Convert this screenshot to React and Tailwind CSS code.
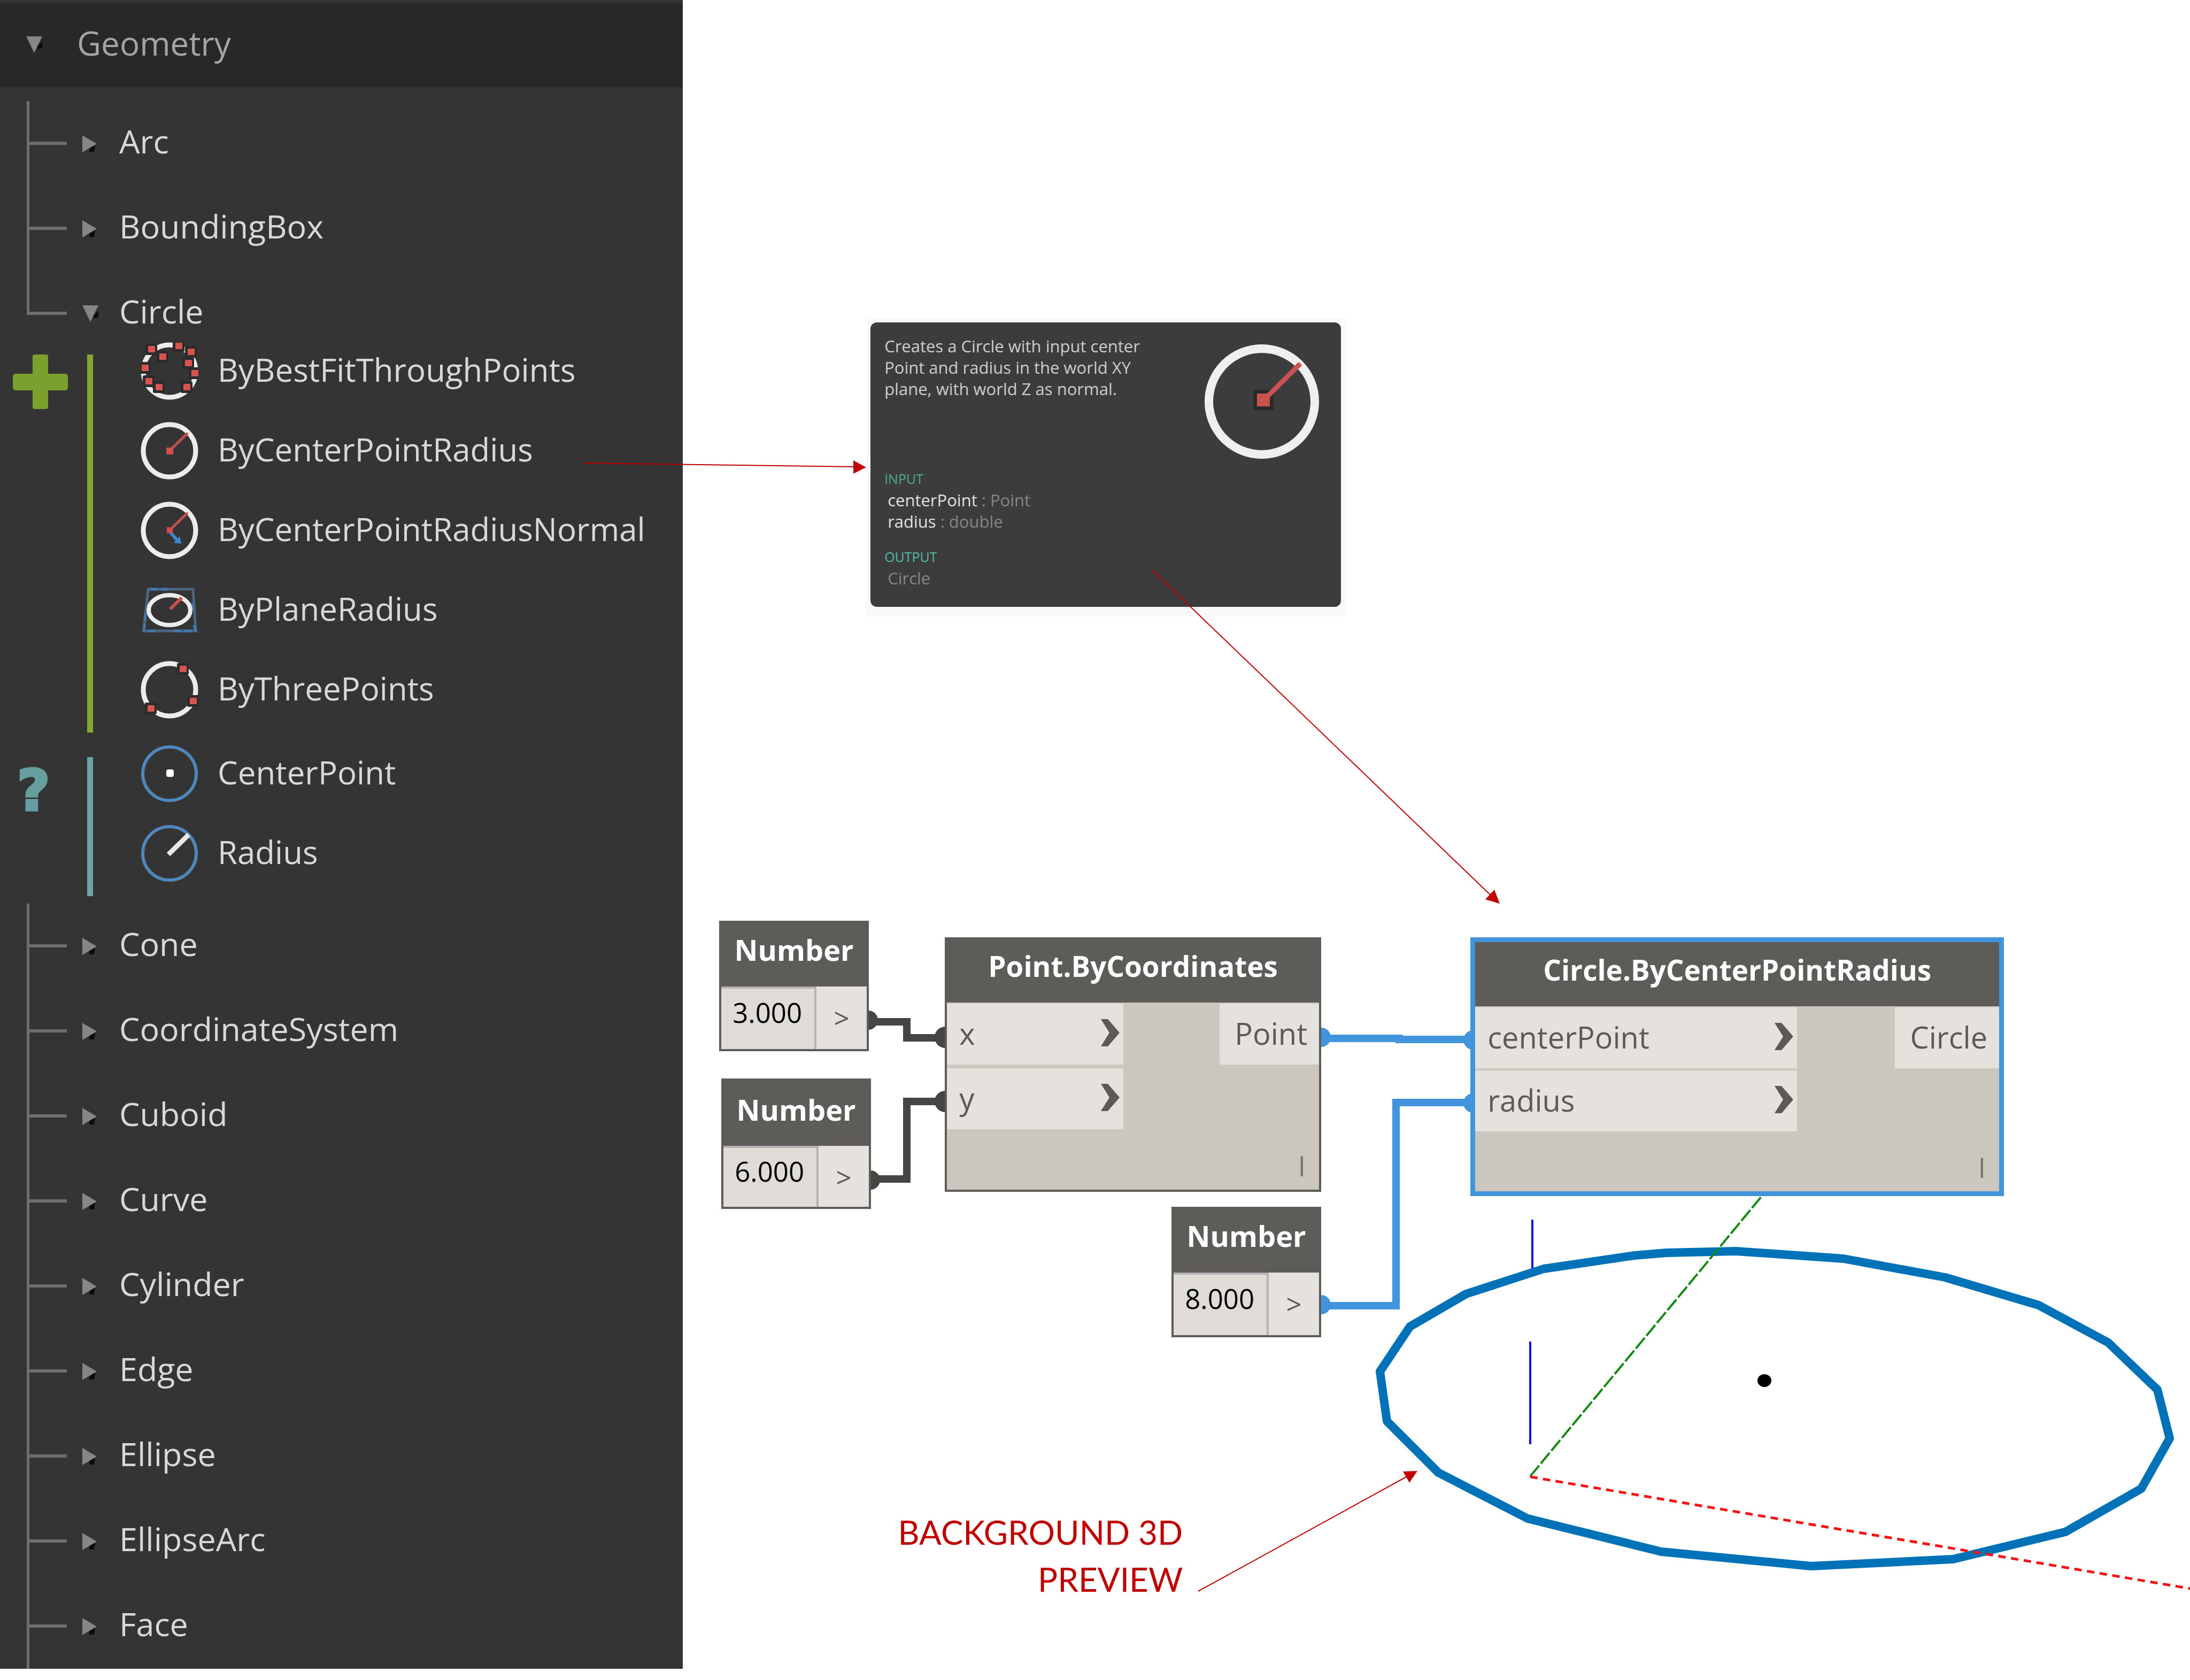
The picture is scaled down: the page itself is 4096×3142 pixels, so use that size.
import React from "react";

/* ---------- Library tree ---------- */

function Caret({ open }) {
  return open ? (
    <svg className="h-[32px] w-[30px] shrink-0" viewBox="0 0 30 32" aria-hidden="true">
      <polygon points="20,20 30,10 30,22 22,24" fill="#0c0c0c" />
      <polygon points="0,0 30,0 15,31" fill="#868686" />
    </svg>
  ) : (
    <svg className="h-[32px] w-[30px] shrink-0" viewBox="0 0 30 32" aria-hidden="true">
      <polygon points="13,24 24,18 22,31 13,31" fill="#0c0c0c" />
      <polygon points="0,0 27,16 0,32" fill="#868686" />
    </svg>
  );
}

function TreeRow({ label, open, last }) {
  return (
    <button
      type="button"
      aria-expanded={!!open}
      className="flex h-[159px] w-full items-center pl-[50px] text-left text-[61px] leading-[84px] text-[#d8d8d8]"
    >
      <span className="flex h-full w-[75px] shrink-0 flex-col">
        <span className="h-[82px] border-b-[6px] border-l-[5px] border-[#6e6e6e]" />
        <span className={last ? "flex-1" : "flex-1 border-l-[5px] border-[#6e6e6e]"} />
      </span>
      <span className="flex w-[98px] shrink-0 justify-start pl-[29px]">
        <Caret open={open} />
      </span>
      <span className="pb-[10px]">{label}</span>
    </button>
  );
}

function Pin({ x, y }) {
  return (
    <g>
      <rect x={x - 11} y={y - 11} width="22" height="22" rx="3" fill="#2a2b2b" />
      <rect x={x - 6} y={y - 6} width="13" height="12" rx="1" fill="#d9534f" />
    </g>
  );
}

const bestFitPins = [
  [71, 7], [94, 18], [20, 13], [41, 27], [89, 39], [101, 58], [8, 48], [15, 73], [34, 84], [86, 84],
];
const threePins = [[79, 15], [98, 75], [19, 89]];

const icons = {
  bestFit: (
    <>
      <circle cx="54" cy="54" r="49" fill="none" stroke="#ececec" strokeWidth="9" />
      {bestFitPins.map(([x, y]) => <Pin key={x} x={x} y={y} />)}
    </>
  ),
  radius: (
    <>
      <circle cx="54" cy="54" r="49" fill="none" stroke="#ececec" strokeWidth="9" />
      <path d="M54 54 88 21" stroke="#c0504d" strokeWidth="5" />
      <rect x="48" y="48" width="13" height="13" fill="#d04f4c" />
    </>
  ),
  normal: (
    <>
      <circle cx="54" cy="54" r="49" fill="none" stroke="#ececec" strokeWidth="9" />
      <path d="M54 54 88 21" stroke="#c0504d" strokeWidth="5" />
      <path d="M54 56 70 74" stroke="#3f87cc" strokeWidth="6" />
      <polygon points="76,79 62,77 73,65" fill="#3f87cc" />
      <rect x="49" y="48" width="11" height="11" fill="#d04f4c" />
    </>
  ),
  plane: (
    <>
      <polygon points="14,15 98,15 103,93 6,93" fill="none" stroke="#4b6680" strokeWidth="5" />
      <path d="M18 15H55M9 60 6 93M14 93H34M62 93H103L100 82M14 60V40M97 40V60" fill="none" stroke="#4079b0" strokeWidth="5" strokeDasharray="14 6" />
      <ellipse cx="54" cy="54" rx="39" ry="28" fill="none" stroke="#ececec" strokeWidth="8" />
      <path d="M55 52 77 31" stroke="#c4524e" strokeWidth="6" />
    </>
  ),
  three: (
    <>
      <circle cx="54" cy="54" r="49" fill="none" stroke="#ececec" strokeWidth="9" />
      {threePins.map(([x, y]) => <Pin key={x} x={x} y={y} />)}
    </>
  ),
  center: (
    <>
      <circle cx="54" cy="54" r="50" fill="none" stroke="#4f86bb" strokeWidth="6" />
      <rect x="48" y="46" width="14" height="14" rx="4" fill="#ffffff" />
    </>
  ),
  length: (
    <>
      <circle cx="54" cy="54" r="50" fill="none" stroke="#4f86bb" strokeWidth="6" />
      <path d="M52 56 90 19" stroke="#e8e8e8" strokeWidth="9" />
    </>
  ),
};

function MethodRow({ label, icon }) {
  return (
    <button
      type="button"
      className="flex h-[149px] w-full items-center gap-[36px] text-left text-[60px] leading-[84px] text-[#d8d8d8]"
    >
      <svg className="h-[108px] w-[108px] shrink-0" viewBox="0 0 108 108" aria-hidden="true">
        {icons[icon]}
      </svg>
      <span className="pb-[6px]">{label}</span>
    </button>
  );
}

function MethodGroup({ marker, bar, items }) {
  return (
    <div className="flex pb-[6px]">
      <div className="flex w-[163px] shrink-0 items-start pl-[24px] pt-[44px]">{marker}</div>
      <div className="flex pt-[44px]">
        <div className={`-mb-[6px] w-[11px] ${bar}`} />
      </div>
      <ul className="flex-1 pl-[89px]">
        {items.map((it) => (
          <li key={it.label}>
            <MethodRow {...it} />
          </li>
        ))}
      </ul>
    </div>
  );
}

const createMethods = [
  { label: "ByBestFitThroughPoints", icon: "bestFit" },
  { label: "ByCenterPointRadius", icon: "radius" },
  { label: "ByCenterPointRadiusNormal", icon: "normal" },
  { label: "ByPlaneRadius", icon: "plane" },
  { label: "ByThreePoints", icon: "three" },
];
const queryMethods = [
  { label: "CenterPoint", icon: "center" },
  { label: "Radius", icon: "length" },
];
const moreClasses = [
  "Cone", "CoordinateSystem", "Cuboid", "Curve", "Cylinder", "Edge", "Ellipse", "EllipseArc", "Face",
];

function Library() {
  return (
    <aside className="w-[31.18%] shrink-0 self-start bg-[#343434] pt-[5px]">
      <button
        type="button"
        aria-expanded="true"
        className="flex h-[158px] w-full items-center bg-[#282828] pl-[49px] text-left text-[62px] leading-[84px] font-medium text-[#a4a4a4]"
      >
        <span className="flex w-[95px] shrink-0">
          <Caret open />
        </span>
        <span className="pb-[8px]">Geometry</span>
      </button>
      <div className="pt-[26px]">
        <TreeRow label="Arc" />
        <TreeRow label="BoundingBox" />
        <TreeRow label="Circle" open last />
      </div>
      <div className="-mt-[47px]">
        <MethodGroup
          bar="bg-[#84a930]"
          items={createMethods}
          marker={
            <svg className="h-[102px] w-[103px]" viewBox="0 0 103 102" aria-label="Create">
              <rect x="37" y="0" width="29" height="102" rx="4" fill="#7ba02e" />
              <rect x="0" y="36" width="103" height="31" rx="5" fill="#7ba02e" />
            </svg>
          }
        />
      </div>
      <div className="mt-[2px]">
        <MethodGroup
          bar="bg-[#6ba5a6]"
          items={queryMethods}
          marker={
            <span className="pl-[8px] font-['DejaVu_Sans',sans-serif] text-[106px] leading-[126px] font-bold text-[#679fa0] [-webkit-text-stroke:5px_#679fa0]">
              ?
            </span>
          }
        />
      </div>
      <div className="pt-[14px]">
        {moreClasses.map((label) => (
          <TreeRow key={label} label={label} />
        ))}
      </div>
    </aside>
  );
}

/* ---------- Tooltip ---------- */

function Tooltip() {
  return (
    <div className="absolute top-[596px] left-[344px] w-[896px] bg-[#f9f9f9] pt-[7px] pr-[9px] pb-[18px] pl-[7px]">
      <div className="flex h-[532px] justify-between rounded-[12px] bg-[#3c3c3c] pt-[24px] pr-[40px] pl-[26px] text-[31px] leading-[40px] text-[#cccccc]">
        <div className="flex flex-col">
          <p className="w-[520px]">
            Creates a Circle with input center
            <br />
            Point and radius in the world XY
            <br />
            plane, with world Z as normal.
          </p>
          <h3 className="mt-[128px] text-[25px] text-[#4aa893]">INPUT</h3>
          <p className="pl-[6px] text-[#858585]">
            <span className="text-[#e0e0e0]">centerPoint</span> : Point
          </p>
          <p className="pl-[6px] text-[#858585]">
            <span className="text-[#e0e0e0]">radius</span> : double
          </p>
          <h3 className="mt-[26px] text-[25px] text-[#4fbca4]">OUTPUT</h3>
          <p className="pl-[6px] text-[#858585]">Circle</p>
        </div>
        <svg className="mt-[16px] h-[216px] w-[216px] shrink-0" viewBox="0 0 216 216" aria-hidden="true">
          <circle cx="108" cy="108" r="99" fill="none" stroke="#efefef" strokeWidth="16" />
          <rect x="92" y="86" width="38" height="38" fill="#2a2a2a" />
          <path d="M111 106 180 37" stroke="#c9524e" strokeWidth="9" />
          <rect x="99" y="93" width="24" height="24" fill="#c9524e" />
        </svg>
      </div>
    </div>
  );
}

/* ---------- Graph nodes ---------- */

function NumberNode({ id, value, place, head }) {
  return (
    <section className={`absolute flex h-[244px] w-[280px] flex-col border-[4px] border-[#5e5c59] bg-[#e5e2dd] ${place}`}>
      <label
        htmlFor={id}
        className={`block bg-[#5e5c59] text-center text-[54px] leading-[76px] font-bold text-white ${head}`}
      >
        Number
      </label>
      <div className="flex flex-1">
        <input
          id={id}
          defaultValue={value}
          className="w-[178px] min-w-0 border-t-[4px] border-r-[4px] border-[#b3b2b6] bg-[#dfdcd7] pb-[24px] pl-[21px] text-[51px] text-black outline-none"
        />
        <span className="flex-1 pt-[24px] text-center text-[51px] leading-[68px] text-[#5a5a5a]">&gt;</span>
      </div>
    </section>
  );
}

function Port({ label }) {
  return (
    <button
      type="button"
      className="flex h-[114px] w-full items-center justify-between bg-[#e5e2dd] pr-[7px] pl-[23px] text-[56px] leading-[76px] text-[#5c5a58]"
    >
      <span className="pb-[4px]">{label}</span>
      <svg className="mb-[6px] h-[51px] w-[35px]" viewBox="0 0 35 51" aria-hidden="true">
        <path d="M0 0H13L35 25.500 13 51H0L16 25.500Z" fill="#5c5a58" />
      </svg>
    </button>
  );
}

function FunctionNode({ title, inputs, output, place, head, inputsWidth, gap }) {
  return (
    <section className={`absolute flex flex-col bg-[#cbc6be] ${place}`}>
      <h2 className={`bg-[#5e5c59] text-center text-[53px] leading-[76px] font-bold text-white ${head}`}>{title}</h2>
      <div className="flex items-start justify-between pt-[2px]">
        <div className={`flex flex-col ${inputsWidth} ${gap}`}>
          {inputs.map((name) => (
            <Port key={name} label={name} />
          ))}
        </div>
        <button
          type="button"
          className="h-[114px] bg-[#e5e2dd] pr-[22px] pb-[4px] pl-[28px] text-[56px] leading-[76px] text-[#5c5a58]"
        >
          {output}
        </button>
      </div>
      <span className="mt-auto mr-[26px] mb-[14px] self-end text-[50px] leading-[60px] text-[#76736f]">l</span>
    </section>
  );
}

/* ---------- 3D preview, wires and annotations ---------- */

const circlePoints =
  "3117,2343 3247,2340 3448,2354 3638,2389 3813,2441 3943,2511 4035,2599 4058,2690 4005,2784 3863,2865 3653,2916 3387,2929 3107,2902 2857,2840 2690,2754 2594,2658 2581,2565 2637,2481 2742,2420 2887,2373 3057,2348";

const layer = "pointer-events-none absolute top-0 left-0 h-[3142px] w-[2819px] overflow-visible";

function Preview() {
  return (
    <svg className={layer} viewBox="1277 0 2819 3142" aria-hidden="true">
      <path d="M2866 2281V2376M2862 2509V2701" stroke="#1010f0" strokeWidth="4" />
      <polygon points={circlePoints} fill="none" stroke="#0072b8" strokeWidth="16" strokeLinejoin="round" />
      <path d="M2862 2761 3296 2236" stroke="#128a12" strokeWidth="4" strokeDasharray="26 5" />
      <path d="M2862 2762 4096 2971" stroke="#f41414" strokeWidth="5" strokeDasharray="14 10" />
      <ellipse cx="3300" cy="2582" rx="13" ry="12" fill="#000000" />
    </svg>
  );
}

function Wires() {
  return (
    <svg className={layer} viewBox="1277 0 2819 3142" aria-hidden="true">
      <g fill="none" strokeWidth="14" stroke="#454545">
        <path d="M1624 1911H1696V1941H1768" />
        <path d="M1628 2205H1696V2060H1768" />
      </g>
      <g fill="#454545">
        <circle cx="1624" cy="1908" r="18" />
        <circle cx="1628" cy="2207" r="18" />
        <circle cx="1768" cy="1940" r="20" />
        <circle cx="1768" cy="2060" r="20" />
      </g>
      <g fill="none" strokeWidth="14" stroke="#4295dd">
        <path d="M2471 1942H2617V1944H2752" />
        <path d="M2471 2442H2611V2062H2752" />
      </g>
      <g fill="#4295dd">
        <circle cx="2471" cy="1940" r="18" />
        <circle cx="2471" cy="2440" r="18" />
        <circle cx="2755" cy="1945" r="18" />
        <circle cx="2755" cy="2063" r="18" />
      </g>
    </svg>
  );
}

function Arrows() {
  return (
    <svg className={layer} viewBox="1277 0 2819 3142" aria-hidden="true">
      <g stroke="#c00000" strokeWidth="2">
        <path d="M1092 866 1600 873" />
        <path d="M2156 1067 2792 1678" />
        <path d="M2241 2976 2634 2760" />
      </g>
      <g fill="#c00000">
        <polygon points="1620,874 1596,861 1596,886" />
        <polygon points="2805,1690 2778,1682 2795,1664" />
        <polygon points="2651,2751 2624,2752 2636,2773" />
      </g>
    </svg>
  );
}

export default function App() {
  return (
    <div className="flex min-h-screen items-stretch bg-white font-['Open_Sans','Noto_Sans',sans-serif]">
      <Library />
      <main className="relative flex-1">
        <Preview />
        <Tooltip />
        <Wires />
        <NumberNode id="num-x" value="3.000" place="left-[68px] top-[1722px]" head="h-[119px] pt-[12px]" />
        <NumberNode id="num-y" value="6.000" place="left-[72px] top-[2017px]" head="h-[122px] pt-[16px]" />
        <NumberNode id="num-r" value="8.000" place="left-[914px] top-[2257px]" head="h-[119px] pt-[12px]" />
        <FunctionNode
          title="Point.ByCoordinates"
          inputs={["x", "y"]}
          output="Point"
          place="left-[490px] top-[1753px] h-[476px] w-[704px] border-[4px] border-[#5e5c59]"
          head="h-[118px] pt-[12px]"
          inputsWidth="w-[330px]"
          gap="gap-[7px]"
        />
        <FunctionNode
          title="Circle.ByCenterPointRadius"
          inputs={["centerPoint", "radius"]}
          output="Circle"
          place="left-[1473px] top-[1753px] h-[484px] w-[998px] border-[9px] border-[#4295dd]"
          head="h-[120px] pt-[14px]"
          inputsWidth="w-[602px]"
          gap="gap-[4px]"
        />
        <p className="absolute top-[2821px] left-[335px] w-[600px] text-right font-['Lato',sans-serif] text-[62px] leading-[88px] text-[#c00000]">
          BACKGROUND 3D
          <br />
          PREVIEW
        </p>
        <Arrows />
      </main>
    </div>
  );
}
